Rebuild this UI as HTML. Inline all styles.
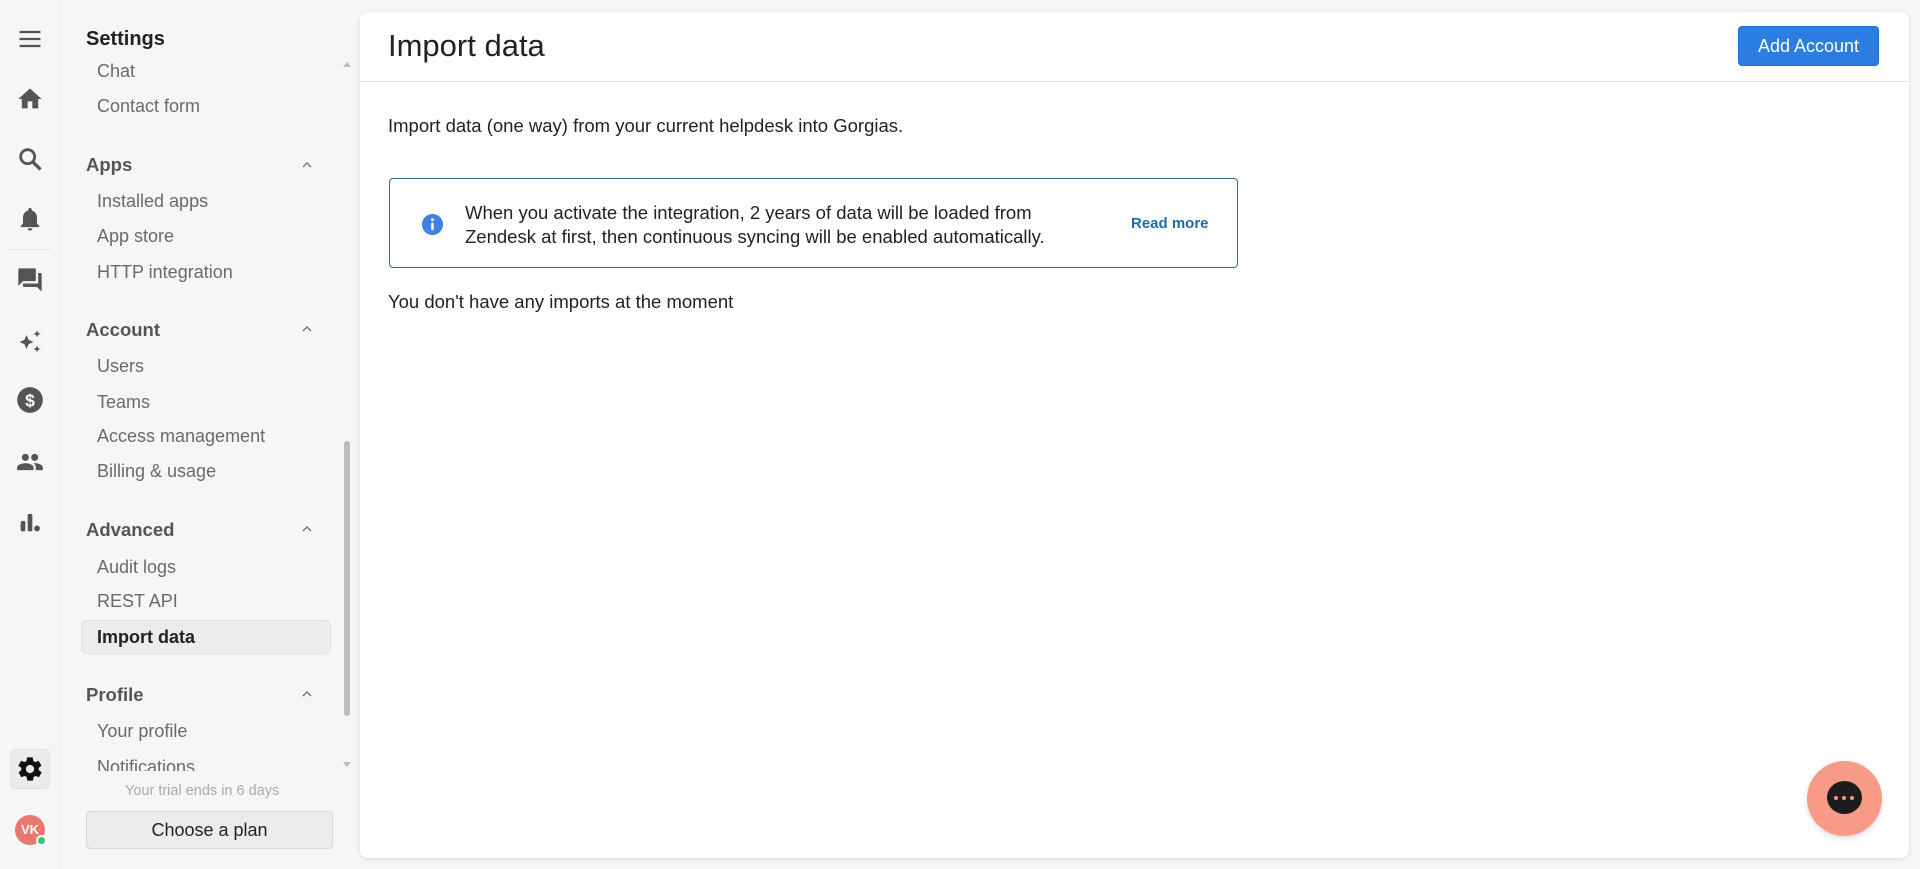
<!DOCTYPE html>
<html><head><meta charset="utf-8"><style>
*{margin:0;padding:0;box-sizing:border-box}
body{width:1920px;height:869px;background:#f6f6f6;font-family:"Liberation Sans",sans-serif;position:relative;overflow:hidden;color:#161616}
.a{position:absolute;white-space:nowrap}
.rail{position:absolute;left:0;top:0;width:60px;height:869px;border-right:1px solid #ebebeb}
.ic{position:absolute;left:16px;width:28px;height:28px}
.sec{font-size:18.5px;font-weight:bold;color:#555;left:86px}
.it{font-size:18px;color:#6a6a6a;left:97px}
.chev{left:300px;width:14px;height:10px}
.panel{position:absolute;left:360px;top:12px;width:1549px;height:846px;background:#fff;border-radius:8px;box-shadow:0 1px 4px rgba(0,0,0,.12)}
</style></head><body>
<div class="rail">
<svg class="ic" style="top:25px" viewBox="0 0 24 24"><path d="M3 6h18M3 12h18M3 18h18" stroke="#555" stroke-width="2"/></svg>
<svg class="ic" style="top:85px" viewBox="0 0 24 24"><path d="M10 20v-6h4v6h5v-8h3L12 3 2 12h3v8z" fill="#555"/></svg>
<svg class="ic" style="top:145px" viewBox="0 0 24 24"><circle cx="10" cy="10" r="6" stroke="#555" stroke-width="2.4" fill="none"/><path d="M14.5 14.5L21 21" stroke="#555" stroke-width="2.8"/></svg>
<svg class="ic" style="top:205px" viewBox="0 0 24 24"><path d="M12 22c1.1 0 2-.9 2-2h-4c0 1.1.9 2 2 2zm6-6v-5c0-3.1-1.6-5.6-4.5-6.3V4c0-.8-.7-1.5-1.5-1.5s-1.5.7-1.5 1.5v.7C7.6 5.4 6 7.9 6 11v5l-2 2v1h16v-1z" fill="#555"/></svg>
<div style="position:absolute;left:10px;top:249px;width:40px;border-top:1px solid #e6e6e6"></div>
<svg class="ic" style="top:266px" viewBox="0 0 24 24"><path d="M21 6h-2v9H6v2c0 .6.4 1 1 1h11l4 4V7c0-.6-.4-1-1-1zm-4 6V3c0-.6-.4-1-1-1H3c-.6 0-1 .4-1 1v14l4-4h10c.6 0 1-.4 1-1z" fill="#555"/></svg>
<svg class="ic" style="top:328px" viewBox="0 0 24 24"><path d="M9 6l1.8 4.2L15 12l-4.2 1.8L9 18l-1.8-4.2L3 12l4.2-1.8zM18 2l.9 2.1L21 5l-2.1.9L18 8l-.9-2.1L15 5l2.1-.9zM18 15l.9 2.1 2.1.9-2.1.9L18 21l-.9-2.1L15 18l2.1-.9z" fill="#555"/></svg>
<svg class="ic" style="top:386px" viewBox="0 0 24 24"><circle cx="12" cy="12" r="11" fill="#555"/><text x="12" y="17.5" font-size="15" font-weight="bold" fill="#fff" text-anchor="middle" font-family="Liberation Sans">$</text></svg>
<svg class="ic" style="top:448px" viewBox="0 0 24 24"><path d="M16 11c1.7 0 3-1.3 3-3s-1.3-3-3-3-3 1.3-3 3 1.3 3 3 3zm-8 0c1.7 0 3-1.3 3-3S9.7 5 8 5 5 6.3 5 8s1.3 3 3 3zm0 2c-2.3 0-7 1.2-7 3.5V19h14v-2.5C15 14.2 10.3 13 8 13zm8 0c-.3 0-.6 0-1 .1 1.2.8 2 1.900 2 3.4V19h6v-2.5c0-2.3-4.700-3.5-7-3.5z" fill="#555"/></svg>
<svg class="ic" style="top:508px" viewBox="0 0 24 24"><rect x="4" y="11" width="4" height="9" rx="1.5" fill="#555"/><rect x="10" y="5" width="4" height="15" rx="1.5" fill="#555"/><circle cx="18" cy="17.5" r="2.5" fill="#555"/></svg>
<div style="position:absolute;left:10px;top:749px;width:40px;height:40px;background:#ebebeb;border-radius:6px;border:1px solid #e0e0e0"></div>
<svg class="ic" style="top:755px" viewBox="0 0 24 24"><path d="M19.4 13c.1-.3.1-.7.1-1s0-.7-.1-1l2.1-1.6c.2-.2.2-.4.1-.6l-2-3.5c-.1-.2-.4-.3-.6-.2l-2.5 1c-.5-.4-1.1-.7-1.7-1l-.4-2.6c0-.3-.2-.5-.5-.5h-4c-.2 0-.4.2-.5.4l-.4 2.7c-.6.2-1.1.6-1.7 1l-2.5-1c-.2-.1-.5 0-.6.2l-2 3.5c-.1.2-.1.5.1.6L4.6 11c0 .3-.1.7-.1 1s0 .7.1 1l-2.1 1.6c-.2.2-.2.4-.1.6l2 3.5c.1.2.4.3.6.2l2.5-1c.5.4 1.1.7 1.7 1l.4 2.6c0 .3.2.5.5.5h4c.2 0 .5-.2.5-.4l.4-2.7c.6-.2 1.2-.6 1.7-1l2.5 1c.2.1.5 0 .6-.2l2-3.5c.1-.2.1-.5-.1-.6zM12 15.5c-1.9 0-3.5-1.6-3.5-3.5s1.6-3.5 3.5-3.5 3.5 1.6 3.5 3.5-1.6 3.5-3.5 3.5z" fill="#111"/></svg>
<div style="position:absolute;left:15px;top:815px;width:30px;height:30px;border-radius:50%;background:#e8776d;color:#fff;font-size:13px;font-weight:bold;text-align:center;line-height:30px">VK</div>
<div style="position:absolute;left:36px;top:835px;width:11px;height:11px;border-radius:50%;background:#2ecc71;border:2px solid #f6f6f6"></div>
</div>

<div class="a" style="left:86px;top:28px;font-size:20px;font-weight:bold;color:#222">Settings</div>
<div class="a it" style="top:61px">Chat</div>
<div class="a it" style="top:96px">Contact form</div>
<div class="a sec" style="top:154px">Apps</div>
<div class="a it" style="top:191px">Installed apps</div>
<div class="a it" style="top:226px">App store</div>
<div class="a it" style="top:262px">HTTP integration</div>
<div class="a sec" style="top:319px">Account</div>
<div class="a it" style="top:356px">Users</div>
<div class="a it" style="top:392px">Teams</div>
<div class="a it" style="top:426px">Access management</div>
<div class="a it" style="top:461px">Billing &amp; usage</div>
<div class="a sec" style="top:519px">Advanced</div>
<div class="a it" style="top:557px">Audit logs</div>
<div class="a it" style="top:591px">REST API</div>
<div style="position:absolute;left:81px;top:620px;width:250px;height:34px;background:#ececec;border:1px solid #e0e0e0;border-radius:6px"></div>
<div class="a it" style="top:627px;color:#222;font-weight:bold">Import data</div>
<div class="a sec" style="top:684px">Profile</div>
<div class="a it" style="top:721px">Your profile</div>
<div style="position:absolute;left:97px;top:757px;height:14px;width:200px;overflow:hidden"><div style="position:absolute;top:0;left:0;white-space:nowrap;font-size:18px;color:#6a6a6a">Notifications</div></div>
<svg class="a chev" style="top:160px" viewBox="0 0 14 10"><path d="M3 7l4-4 4 4" stroke="#777" stroke-width="1.5" fill="none"/></svg>
<svg class="a chev" style="top:324px" viewBox="0 0 14 10"><path d="M3 7l4-4 4 4" stroke="#777" stroke-width="1.5" fill="none"/></svg>
<svg class="a chev" style="top:524px" viewBox="0 0 14 10"><path d="M3 7l4-4 4 4" stroke="#777" stroke-width="1.5" fill="none"/></svg>
<svg class="a chev" style="top:689px" viewBox="0 0 14 10"><path d="M3 7l4-4 4 4" stroke="#777" stroke-width="1.5" fill="none"/></svg>
<div style="position:absolute;left:343px;top:62px;border:4px solid transparent;border-bottom:5px solid #bbb;border-top:0"></div>
<div style="position:absolute;left:343px;top:762px;border:4px solid transparent;border-top:5px solid #bbb;border-bottom:0"></div>
<div style="position:absolute;left:344px;top:441px;width:6px;height:275px;background:#bdbdbd;border-radius:3px"></div>
<div class="a" style="left:125px;top:783px;font-size:14.5px;color:#aaa">Your trial ends in 6 days</div>
<div style="position:absolute;left:86px;top:811px;width:247px;height:38px;background:#ececec;border:1px solid #d6d6d6;border-radius:4px;font-size:18px;color:#222;text-align:center;line-height:36px">Choose a plan</div>

<div class="panel">
<div class="a" style="left:28px;top:16px;font-size:31px;color:#222">Import data</div>
<div style="position:absolute;left:0;right:0;top:69px;border-top:1px solid #e4e4e4"></div>
<div style="position:absolute;left:1378px;top:14px;width:141px;height:40px;background:#2b7de1;border:1px solid #1f6fd0;border-radius:4px;color:#fff;font-size:18px;text-align:center;line-height:38px">Add Account</div>
<div class="a" style="left:28px;top:103px;font-size:18.5px;color:#222">Import data (one way) from your current helpdesk into Gorgias.</div>
<div style="position:absolute;left:29px;top:166px;width:849px;height:90px;border:1px solid #2e6f95;border-radius:4px"></div>
<svg class="a" style="left:61px;top:201px" width="23" height="23" viewBox="0 0 24 24"><circle cx="12" cy="12" r="11" fill="#3f82e4"/><circle cx="12" cy="7" r="1.5" fill="#fff"/><rect x="10.7" y="10" width="2.6" height="8" rx="1" fill="#fff"/></svg>
<div class="a" style="left:105px;top:189px;font-size:18.5px;color:#222;line-height:24px">When you activate the integration, 2 years of data will be loaded from<br>Zendesk at first, then continuous syncing will be enabled automatically.</div>
<div class="a" style="left:771px;top:203px;font-size:15px;color:#1f6ba8;font-weight:bold">Read more</div>
<div class="a" style="left:28px;top:279px;font-size:18.5px;color:#222">You don't have any imports at the moment</div>
</div>

<div style="position:absolute;left:1807px;top:761px;width:75px;height:75px;border-radius:50%;background:#f79b86;box-shadow:0 2px 6px rgba(0,0,0,.15)"></div>
<div style="position:absolute;left:1827px;top:781px;width:35px;height:33px;border-radius:50%;background:#1c1c1c"></div>
<div style="position:absolute;left:1834px;top:796px;width:4px;height:4px;border-radius:50%;background:#f79b86;box-shadow:8px 0 0 #f79b86,16px 0 0 #f79b86"></div>
</body></html>
